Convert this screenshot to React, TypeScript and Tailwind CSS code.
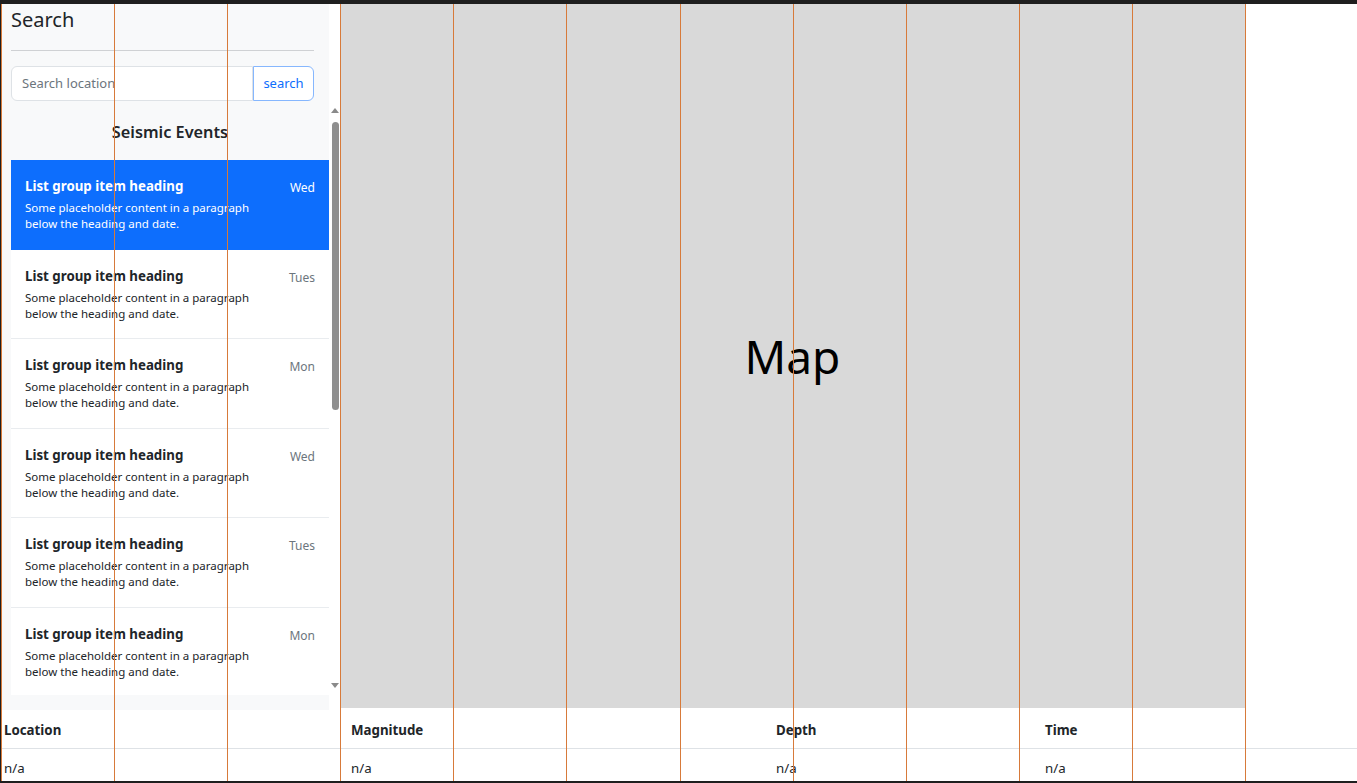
import React from 'react';

const events = [
  { day: 'Wed', active: true },
  { day: 'Tues', active: false },
  { day: 'Mon', active: false },
  { day: 'Wed', active: false },
  { day: 'Tues', active: false },
  { day: 'Mon', active: false },
];

const columns = [
  { label: 'Location', width: 'w-[347px]' },
  { label: 'Magnitude', width: 'w-[425px]' },
  { label: 'Depth', width: 'w-[269px]' },
  { label: 'Time', width: 'w-[315px]' },
];

const EventItem: React.FC<{ day: string; active: boolean }> = ({ day, active }) => (
  <div
    className={`flex h-[89.6px] px-[14px] pt-[16px] border-b ${
      active ? 'bg-[#0d6efd] border-[#0d6efd] text-white' : 'bg-white border-[#e9ecef] text-[#212529]'
    }`}
  >
    <div className="flex-1">
      <div className="text-[13.3px] leading-[20px] font-bold">List group item heading</div>
      <p className="mt-[4px] text-[11.5px] leading-[16px]">
        Some placeholder content in a paragraph
        <br />
        below the heading and date.
      </p>
    </div>
    <span className={`pt-[2px] text-[12px] leading-[20px] ${active ? 'text-white' : 'text-[#6c757d]'}`}>{day}</span>
  </div>
);

export default function App() {
  return (
    <div className="relative w-[1357px] h-[783px] overflow-hidden bg-white border-t-4 border-l border-b-2 border-[#1f1f1f] font-['Noto_Sans',sans-serif] text-[#212529]">
      <div className="flex h-[706px]">
        {/* sidebar */}
        <div className="flex w-[339px]">
          <div className="flex w-[328px] flex-col bg-[#f8f9fa] pl-[10px]">
            <div className="pr-[15px]">
              <h5 className="mt-[4px] text-[20px] leading-[24px]">Search</h5>
              <hr className="mt-[18px] border-t border-[#cfd1d4]" />
              <div className="mt-[15px] flex h-[35px]">
                <input
                  type="text"
                  placeholder="Search location"
                  className="min-w-0 flex-1 rounded-l-[6px] border border-[#dee2e6] bg-white px-[10px] text-[13px] outline-none placeholder:text-[#6c757d]"
                />
                <button className="w-[61px] rounded-r-[6px] border border-[#86b7fe] bg-white text-[13px] text-[#0d6efd]">
                  search
                </button>
              </div>
            </div>
            <div className="mt-[3px] h-[591px] overflow-hidden">
              <h6 className="pt-[17px] pb-[17px] text-center text-[16.3px] leading-[22px] font-semibold">Seismic Events</h6>
              {events.map((e, i) => (
                <EventItem key={i} day={e.day} active={e.active} />
              ))}
            </div>
          </div>
          {/* scrollbar */}
          <div className="flex w-[11px] flex-col items-center bg-white pt-[104px] pl-[1px]">
            <div className="h-0 w-0 border-x-[4px] border-b-[5px] border-x-transparent border-b-[#8a8a8a]" />
            <div className="mt-[9px] h-[288px] w-[7px] rounded-full bg-[#8f8f8f]" />
            <div className="mt-[273px] h-0 w-0 border-x-[4px] border-t-[5px] border-x-transparent border-t-[#8a8a8a]" />
          </div>
        </div>

        {/* map */}
        <div className="flex h-[704px] w-[905px] items-center justify-center bg-[#d9d9d9] text-[46px] text-black">
          Map
        </div>
      </div>

      {/* results table */}
      <table className="w-full table-fixed border-collapse text-[13.3px] leading-[20px]">
        <thead>
          <tr className="border-b border-[#dee2e6]">
            {columns.map((c) => (
              <th key={c.label} className={`${c.width} pl-[3px] pt-[10px] pb-[8px] text-left font-bold`}>
                {c.label}
              </th>
            ))}
          </tr>
        </thead>
        <tbody>
          <tr>
            {columns.map((c) => (
              <td key={c.label} className="pl-[3px] pt-[9px] pb-[8px]">
                n/a
              </td>
            ))}
          </tr>
        </tbody>
      </table>

      {/* layout grid overlay */}
      <div className="pointer-events-none absolute top-0 bottom-0 left-0 grid w-[1357px] grid-cols-12">
        {Array.from({ length: 12 }).map((_, i) => (
          <div key={i} className="border-l border-[#d77a3a]" />
        ))}
      </div>
    </div>
  );
}
